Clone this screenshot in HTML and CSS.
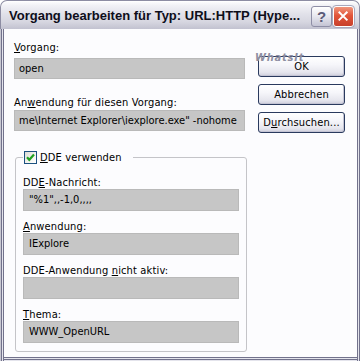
FILE: index.html
```html
<!DOCTYPE html>
<html lang="de">
<head>
<meta charset="utf-8">
<title>Vorgang bearbeiten</title>
<link rel="stylesheet" href="styles.css">
</head>
<body>
<div class="window">
  <div class="titlebar">
    <span class="title">Vorgang bearbeiten für Typ: URL:HTTP (Hype...</span>
    <div class="tb-buttons">
      <span class="tb-btn help">?</span>
      <span class="tb-btn close">
        <svg width="21" height="21" viewBox="0 0 21 21"><path d="M6 6 L14 14 M14 6 L6 14" stroke="#fff" stroke-width="2.2" stroke-linecap="square"/></svg>
      </span>
    </div>
  </div>
  <div class="frame">
    <div class="top">
      <div class="fields">
        <div class="lbl"><u>V</u>organg:</div>
        <div class="field f1">open</div>
        <div class="lbl l2">An<u>w</u>endung für diesen Vorgang:</div>
        <div class="field f2">me\Internet Explorer\iexplore.exe" -nohome</div>
      </div>
      <div class="buttons">
        <span class="watermark">WhatsIt</span>
        <button class="btn">OK</button>
        <button class="btn">Abbrechen</button>
        <button class="btn">D<u>u</u>rchsuchen...</button>
      </div>
    </div>
    <fieldset class="group">
      <legend class="legend"><span class="check"><svg width="11" height="11" viewBox="0 0 11 11"><path d="M2 5.2 L4.3 7.8 L9 2.5" fill="none" stroke="#21a121" stroke-width="2.2"/></svg></span><u>D</u>DE verwenden</legend>
      <div class="lbl g-first">DD<u>E</u>-Nachricht:</div>
      <div class="field gfield">"%1",,-1,0,,,,</div>
      <div class="lbl"><u>A</u>nwendung:</div>
      <div class="field gfield">IExplore</div>
      <div class="lbl">DDE-Anwendung <u>n</u>icht aktiv:</div>
      <div class="field gfield"></div>
      <div class="lbl"><u>T</u>hema:</div>
      <div class="field gfield last">WWW_OpenURL</div>
    </fieldset>
  </div>
</div>
</body>
</html>
```
FILE: styles.css
```css
* { box-sizing: border-box; }
html, body { margin: 0; padding: 0; background: #ffffff; }
body { font-family: "DejaVu Sans Condensed", "DejaVu Sans", sans-serif; font-stretch: condensed; font-size: 11px; color: #000; }

.window { width: 360px; height: 361px; display: flex; flex-direction: column; }

.titlebar {
  height: 29px;
  flex: none;
  display: flex;
  align-items: center;
  padding: 0 0 0 8px;
  border-radius: 7px 7px 0 0;
  border: 1px solid #8d8da3;
  border-bottom: none;
  background: linear-gradient(to bottom, #ffffff 0%, #f2f2f6 15%, #e2e2ea 45%, #d6d6e0 75%, #c2c2d0 100%);
  box-shadow: inset 0 1px 0 #ffffff;
}
.title {
  font-family: "Liberation Sans", Arial, sans-serif;
  font-stretch: normal;
  font-weight: bold;
  font-size: 13px;
  color: #0e0e1a;
  flex: 1;
  white-space: nowrap;
  padding-top: 1px;
}
.tb-buttons { display: flex; gap: 1px; margin-right: 5px; padding-top: 2px; }
.tb-btn {
  width: 21px; height: 21px;
  border-radius: 3px;
  display: flex; align-items: center; justify-content: center;
}
.help {
  border: 1px solid #8e8ea6;
  background: linear-gradient(to bottom, #ffffff 0%, #e6e6ee 50%, #c4c4d4 100%);
  font-family: "Liberation Sans", Arial, sans-serif;
  font-stretch: normal;
  font-weight: bold;
  font-size: 15px;
  color: #5a5a78;
}
.close {
  border: 1px solid #ffffff;
  outline: 1px solid #a8a8bc;
  background: linear-gradient(to bottom, #f0967c 0%, #e2553a 45%, #c8402c 100%);
}
.close svg { display: block; }

.frame {
  flex: 1;
  background: #fcfcfe;
  padding: 0 3px 4px 4px;
  box-shadow:
    inset 1px 0 0 #c8c8d2,
    inset 2px 0 0 #72728c,
    inset 3px 0 0 #e4e4ec,
    inset 4px 0 0 #72728c,
    inset -1px 0 0 #72728c,
    inset -2px 0 0 #e4e4ec,
    inset -3px 0 0 #72728c,
    inset 0 -1px 0 #e4e4ec,
    inset 0 -2px 0 #72728c,
    inset 0 -3px 0 #e4e4ec,
    inset 0 -4px 0 #72728c;
}

.top { display: flex; padding: 12px 0 0 10px; }
.fields { width: 231px; }
.lbl { line-height: 13px; height: 13px; white-space: nowrap; letter-spacing: 0.15px; }
.l2 { margin-top: 17px; }

.field {
  height: 21px;
  line-height: 19px;
  padding: 0 4px;
  white-space: nowrap;
  overflow: hidden;
  border: 1px solid #b9b9b9;
  background-color: #c6c6c6;
  background-image: radial-gradient(circle, #cfcfcf 0.6px, transparent 0.7px);
  background-size: 2px 2px;
}
.f1 { margin-top: 4px; }
.f2 { margin-top: 1px; }

.buttons {
  position: relative;
  width: 87px;
  margin-left: 13px;
  padding-top: 15px;
  display: flex;
  flex-direction: column;
  gap: 7px;
}
.btn {
  height: 21px;
  width: 87px;
  padding: 0;
  font-family: "DejaVu Sans Condensed", "DejaVu Sans", sans-serif;
  font-stretch: condensed;
  font-size: 11px;
  letter-spacing: 0.15px;
  color: #000;
  border: 1px solid #2a3a5e;
  border-radius: 3px;
  background: linear-gradient(to bottom, #ffffff 0%, #f6f6fa 40%, #e6e6ee 80%, #cfcfdc 100%);
  box-shadow: inset -1px -1px 0 #c4c4d4;
}
.watermark {
  position: absolute;
  left: -3px;
  top: 10px;
  z-index: 2;
  font-family: "DejaVu Sans", sans-serif;
  font-style: italic;
  font-weight: bold;
  font-size: 11px;
  color: #8e8ea2;
  letter-spacing: 0.8px;
  pointer-events: none;
}

.group {
  margin: 18px 0 0 11px;
  width: 232px;
  border: 1px solid #c4c4c8;
  border-radius: 3px;
  padding: 0 7px 7px 7px;
  min-inline-size: 0;
}
.legend {
  padding: 0 11px 0 1px;
  height: 13px;
  line-height: 13px;
  display: flex;
  align-items: center;
  letter-spacing: 0.15px;
}
.check {
  width: 13px; height: 13px;
  border: 1px solid #1c5180;
  background: linear-gradient(135deg, #dcdcd6 0%, #f4f4f0 60%, #ffffff 100%);
  margin-right: 3px;
  display: flex; align-items: center; justify-content: center;
}
.check svg { display: block; }
.g-first { margin-top: 12px; }
.gfield { height: 22px; line-height: 20px; padding: 0 5px; margin-bottom: 9px; }
.gfield.last { margin-bottom: 1px; }
```
